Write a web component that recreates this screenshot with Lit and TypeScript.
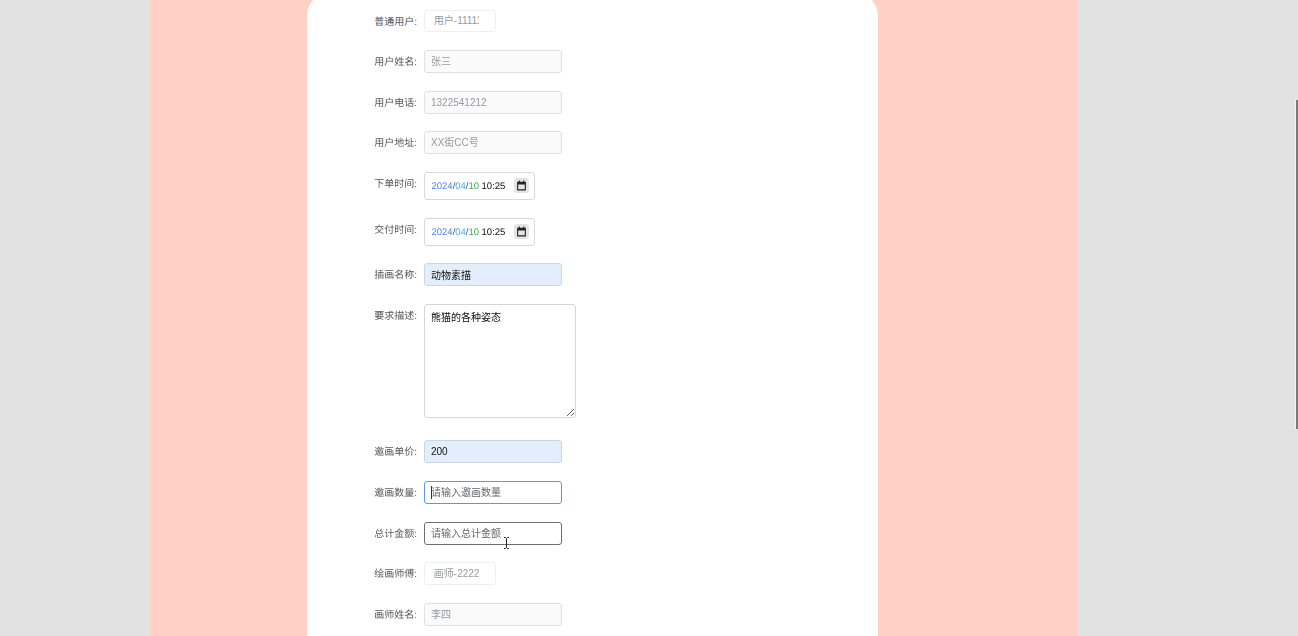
import { LitElement, html, css } from "lit";
import { customElement } from "lit/decorators.js";

type Row = { label: string; kind: string; text?: string; ph?: string };

const rows: Row[] = [
  { label: "普通用户:", kind: "short", ph: "用户-11111" },
  { label: "用户姓名:", kind: "muted", ph: "张三" },
  { label: "用户电话:", kind: "muted", ph: "1322541212" },
  { label: "用户地址:", kind: "muted", ph: "XX街CC号" },
  { label: "下单时间:", kind: "date" },
  { label: "交付时间:", kind: "date" },
  { label: "插画名称:", kind: "filled", text: "动物素描" },
  { label: "要求描述:", kind: "area", text: "熊猫的各种姿态" },
  { label: "邀画单价:", kind: "filled", text: "200" },
  { label: "邀画数量:", kind: "focus", ph: "请输入邀画数量" },
  { label: "总计金额:", kind: "hover", ph: "请输入总计金额" },
  { label: "绘画师傅:", kind: "short", ph: "画师-2222" },
  { label: "画师姓名:", kind: "muted", ph: "李四" },
];

@customElement("app-root")
export class AppRoot extends LitElement {
  static styles = css`
    :host {
      display: block;
      height: 636px;
      overflow: hidden;
      position: relative;
      background: #e2e2e2;
      font-family: "Liberation Sans", "Noto Sans CJK SC", sans-serif;
      font-size: 10px;
      color: #606266;
      text-rendering: geometricPrecision;
    }
    .band {
      display: flow-root;
      width: 928px;
      height: 100%;
      margin-left: 150px;
      background: #ffd0c6;
      padding-left: 157px;
      box-sizing: border-box;
    }
    .card {
      width: 571px;
      height: 700px;
      margin-top: -8px;
      box-sizing: border-box;
      background: #fff;
      border-radius: 24px;
      padding: 17.6px 0 0 0;
      display: flex;
      flex-direction: column;
      gap: 17.6px;
      filter: blur(0.45px);
    }
    .row {
      display: flex;
      align-items: flex-start;
      gap: 7px;
    }
    .label {
      width: 110px;
      height: 23px;
      flex: none;
      text-align: right;
      line-height: 25px;
      color: #55575c;
    }
    .box {
      box-sizing: border-box;
      width: 138px;
      height: 23px;
      margin: 0;
      padding: 0 6px;
      border: 1px solid #dfe1e5;
      border-radius: 3px;
      font: inherit;
      outline: none;
      background: #fff;
      display: block;
      color: #303133;
    }
    .box::placeholder {
      color: #96999f;
      opacity: 1;
    }
    .short {
      width: 72px;
      height: 22.6px;
      padding: 0 16px 0 8.8px;
      border-color: #eff0f2;
      background: #fff;
    }
    .muted {
      background: #fafafa;
    }
    .filled {
      background: #e3edfc;
      border-color: #ccd5e3;
      color: #111;
    }
    .focus {
      border: 1.2px solid #5f97e8;
    }
    .focus::placeholder,
    .hover::placeholder {
      color: #66686e;
    }
    .hover {
      border: 1.2px solid #6c6d72;
    }
    .wrap {
      position: relative;
    }
    .caret {
      position: absolute;
      left: 6.5px;
      top: 5px;
      width: 1px;
      height: 13px;
      background: #333;
    }
    .area {
      width: 152px;
      height: 114px;
      padding: 6px;
      line-height: 14px;
      margin-bottom: 5px;
      border-color: #d6d6d6;
      resize: both;
      color: #111;
    }
    .date {
      box-sizing: border-box;
      width: 111px;
      height: 28px;
      border: 1px solid #d9d9d9;
      border-radius: 3px;
      padding: 0 5px 0 6.5px;
      display: flex;
      align-items: center;
      justify-content: space-between;
      font-size: 9.5px;
      color: #555;
      background: #fff;
    }
    .stamp {
      padding-top: 1px;
    }
    .y { color: #4f86ec; }
    .m { color: #45b5f2; }
    .d { color: #46a84e; }
    .t { color: #111; margin-left: 2.5px; }
    .cal {
      width: 15px;
      height: 15px;
      border-radius: 3px;
      background: #e4e4e4;
      display: flex;
      align-items: center;
      justify-content: center;
    }
    .cal svg { width: 11px; height: 11px; display: block; }
    .scroll {
      position: absolute;
      right: 0;
      top: 100px;
      width: 2px;
      height: 329px;
      background: #7a7a7a;
      box-shadow: -1px 0 0 #f2f2f2;
    }
    .cursor {
      position: absolute;
      left: 503px;
      top: 537px;
      width: 7px;
      height: 12px;
    }
  `;

  private control(r: Row) {
    switch (r.kind) {
      case "date":
        return html`<div class="date">
          <span class="stamp"><span class="y">2024</span>/<span class="m">04</span>/<span class="d">10</span><span class="t">10:25</span></span>
          <span class="cal"><svg viewBox="0 0 10 10"><path fill="#222" d="M1 1.5h1.5V.5h1v1h3V.5h1v1H9v8H1zM2 4v4.5h6V4z"/></svg></span>
        </div>`;
      case "area":
        return html`<textarea class="box area" .value=${r.text ?? ""}></textarea>`;
      case "focus":
        return html`<div class="wrap"><input class="box focus" placeholder=${r.ph ?? ""} /><span class="caret"></span></div>`;
      case "filled":
        return html`<input class="box filled" .value=${r.text ?? ""} />`;
      default:
        return html`<input class="box ${r.kind}" placeholder=${r.ph ?? ""} />`;
    }
  }

  render() {
    return html`
      <div class="band">
        <div class="card">
          ${rows.map(
            (r) => html`<div class="row"><div class="label">${r.label}</div>${this.control(r)}</div>`
          )}
        </div>
      </div>
      <div class="scroll"></div>
      <svg class="cursor" viewBox="0 0 7 12" fill="none" stroke="#222" stroke-width="1">
        <path d="M1 .5h1.5l1 1 1-1H6M3.5 1.5v9M1 11.5h1.5l1-1 1 1H6" />
      </svg>
    `;
  }
}
